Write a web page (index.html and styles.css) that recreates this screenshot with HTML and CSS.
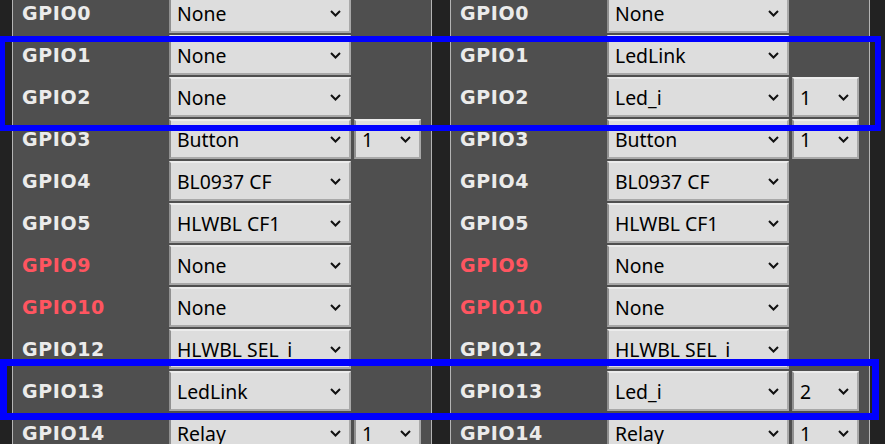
FILE: index.html
```html
<!DOCTYPE html>
<html>
<head>
<meta charset="utf-8">
<link rel="stylesheet" href="styles.css">
</head>
<body>
<div class="page">
  <div class="panel">
    <div class="row"><span class="lbl">GPIO0</span><select class="sel"><option>None</option></select></div>
    <div class="row"><span class="lbl">GPIO1</span><select class="sel"><option>None</option></select></div>
    <div class="row"><span class="lbl">GPIO2</span><select class="sel"><option>None</option></select></div>
    <div class="row"><span class="lbl">GPIO3</span><select class="sel"><option>Button</option></select><select class="sel sel-ch"><option>1</option></select></div>
    <div class="row"><span class="lbl">GPIO4</span><select class="sel"><option>BL0937 CF</option></select></div>
    <div class="row"><span class="lbl">GPIO5</span><select class="sel"><option>HLWBL CF1</option></select></div>
    <div class="row"><span class="lbl lbl-warn">GPIO9</span><select class="sel"><option>None</option></select></div>
    <div class="row"><span class="lbl lbl-warn">GPIO10</span><select class="sel"><option>None</option></select></div>
    <div class="row"><span class="lbl">GPIO12</span><select class="sel"><option>HLWBL SEL_i</option></select></div>
    <div class="row"><span class="lbl">GPIO13</span><select class="sel"><option>LedLink</option></select></div>
    <div class="row"><span class="lbl">GPIO14</span><select class="sel"><option>Relay</option></select><select class="sel sel-ch"><option>1</option></select></div>
  </div>
  <div class="panel">
    <div class="row"><span class="lbl">GPIO0</span><select class="sel"><option>None</option></select></div>
    <div class="row"><span class="lbl">GPIO1</span><select class="sel"><option>LedLink</option></select></div>
    <div class="row"><span class="lbl">GPIO2</span><select class="sel"><option>Led_i</option></select><select class="sel sel-ch"><option>1</option></select></div>
    <div class="row"><span class="lbl">GPIO3</span><select class="sel"><option>Button</option></select><select class="sel sel-ch"><option>1</option></select></div>
    <div class="row"><span class="lbl">GPIO4</span><select class="sel"><option>BL0937 CF</option></select></div>
    <div class="row"><span class="lbl">GPIO5</span><select class="sel"><option>HLWBL CF1</option></select></div>
    <div class="row"><span class="lbl lbl-warn">GPIO9</span><select class="sel"><option>None</option></select></div>
    <div class="row"><span class="lbl lbl-warn">GPIO10</span><select class="sel"><option>None</option></select></div>
    <div class="row"><span class="lbl">GPIO12</span><select class="sel"><option>HLWBL SEL_i</option></select></div>
    <div class="row"><span class="lbl">GPIO13</span><select class="sel"><option>Led_i</option></select><select class="sel sel-ch"><option>2</option></select></div>
    <div class="row"><span class="lbl">GPIO14</span><select class="sel"><option>Relay</option></select><select class="sel sel-ch"><option>1</option></select></div>
  </div>
</div>
<div class="mark mark-top"></div>
<div class="mark mark-bottom"></div>
</body>
</html>
```
FILE: styles.css
```css
html, body {
  margin: 0;
  padding: 0;
  background: #222222;
  overflow: hidden;
  height: 444px;
}
body {
  position: relative;
  font-family: "Noto Sans", sans-serif;
}
.page {
  display: flex;
  gap: 18px;
  padding-left: 12px;
  margin-top: -8px;
}
.panel {
  width: 418px;
  height: 480px;
  background: #4f4f4f;
  border-left: 1px solid #b4b4b4;
  border-right: 1px solid #b4b4b4;
}
.row {
  display: grid;
  grid-template-columns: 153px 182px 67px;
  column-gap: 3px;
  height: 42px;
  align-items: center;
}
.lbl {
  padding-left: 9px;
  font-family: "DejaVu Sans", sans-serif;
  font-weight: bold;
  font-size: 19px;
  letter-spacing: 0.6px;
  color: #ebebeb;
}
.lbl-warn {
  color: #ff5560;
}
.sel {
  -webkit-appearance: none;
  appearance: none;
  box-sizing: border-box;
  height: 40px;
  margin: 0;
  font-family: "Noto Sans", sans-serif;
  font-size: 19.4px;
  color: #000;
  background-color: #dddddd;
  background-image: url("data:image/svg+xml;utf8,<svg xmlns='http://www.w3.org/2000/svg' width='11' height='7' viewBox='0 0 11 7'><path d='M1 1 L5.5 5.5 L10 1' fill='none' stroke='%23111' stroke-width='2'/></svg>");
  background-repeat: no-repeat;
  background-position: right 8px center;
  background-size: 11px 7px;
  border-style: solid;
  border-width: 2px;
  border-color: #ececec #a8a8a8 #a8a8a8 #909090;
  border-radius: 0;
  padding: 0 20px 0 6px;
}
.mark {
  position: absolute;
  box-sizing: border-box;
  border: 6px solid #0000ff;
}
.mark-top {
  left: -1px;
  top: 36px;
  width: 882px;
  height: 95px;
}
.mark-bottom {
  left: 0;
  top: 359px;
  width: 879px;
  height: 61px;
  border-width: 7px;
}
```
